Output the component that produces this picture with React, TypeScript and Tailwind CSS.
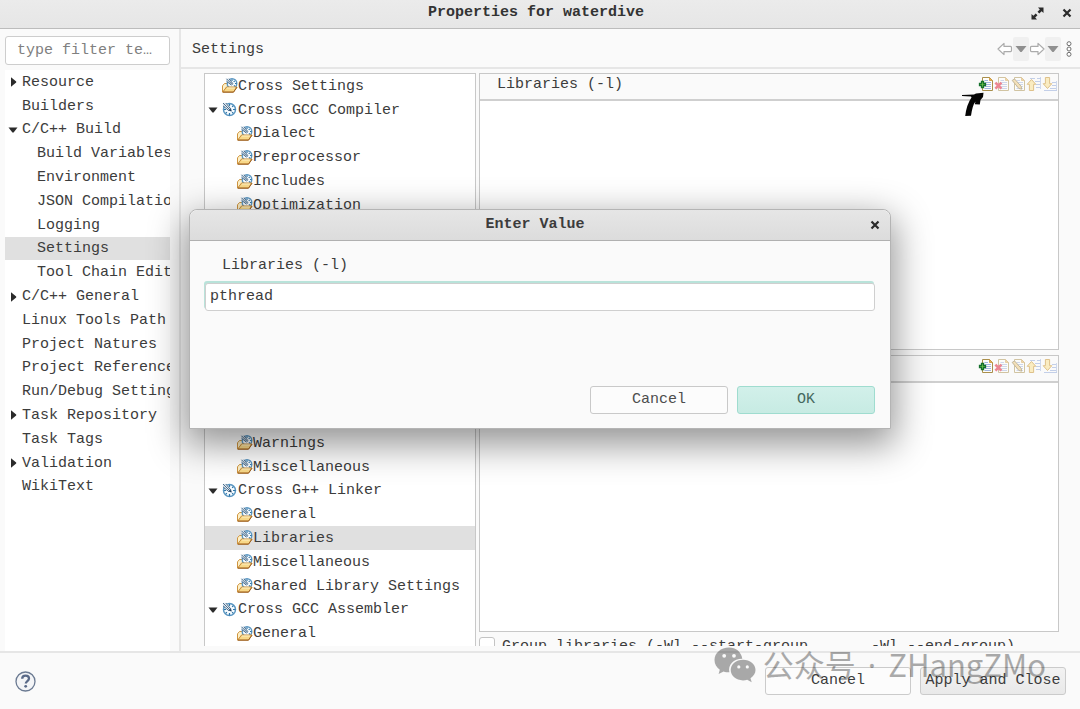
import React, { useState } from 'react';

interface TreeItem {
  label: string;
  level: number;
  open?: boolean;
  hasChildren?: boolean;
}

const pages: TreeItem[] = [
  { label: 'Resource', level: 0, hasChildren: true },
  { label: 'Builders', level: 0 },
  { label: 'C/C++ Build', level: 0, hasChildren: true, open: true },
  { label: 'Build Variables', level: 1 },
  { label: 'Environment', level: 1 },
  { label: 'JSON Compilation', level: 1 },
  { label: 'Logging', level: 1 },
  { label: 'Settings', level: 1 },
  { label: 'Tool Chain Editor', level: 1 },
  { label: 'C/C++ General', level: 0, hasChildren: true },
  { label: 'Linux Tools Path', level: 0 },
  { label: 'Project Natures', level: 0 },
  { label: 'Project References', level: 0 },
  { label: 'Run/Debug Settings', level: 0 },
  { label: 'Task Repository', level: 0, hasChildren: true },
  { label: 'Task Tags', level: 0 },
  { label: 'Validation', level: 0, hasChildren: true },
  { label: 'WikiText', level: 0 },
];

const tools: TreeItem[] = [
  { label: 'Cross Settings', level: 0 },
  { label: 'Cross GCC Compiler', level: 0, hasChildren: true },
  { label: 'Dialect', level: 1 },
  { label: 'Preprocessor', level: 1 },
  { label: 'Includes', level: 1 },
  { label: 'Optimization', level: 1 },
  { label: 'Debugging', level: 1 },
  { label: 'Warnings', level: 1 },
  { label: 'Miscellaneous', level: 1 },
  { label: 'Cross G++ Compiler', level: 0, hasChildren: true },
  { label: 'Dialect', level: 1 },
  { label: 'Preprocessor', level: 1 },
  { label: 'Includes', level: 1 },
  { label: 'Optimization', level: 1 },
  { label: 'Debugging', level: 1 },
  { label: 'Warnings', level: 1 },
  { label: 'Miscellaneous', level: 1 },
  { label: 'Cross G++ Linker', level: 0, hasChildren: true },
  { label: 'General', level: 1 },
  { label: 'Libraries', level: 1 },
  { label: 'Miscellaneous', level: 1 },
  { label: 'Shared Library Settings', level: 1 },
  { label: 'Cross GCC Assembler', level: 0, hasChildren: true },
  { label: 'General', level: 1 },
];

function Expander({ open }: { open?: boolean }) {
  return (
    <svg width="10" height="12" viewBox="0 0 10 12" fill="#2b2b2b" aria-hidden="true">
      {open ? <path d="M0.5 3.5h9L5.6 8.6H4.4z" /> : <path d="M3 1.2 8.2 5.4v1.2L3 10.8z" />}
    </svg>
  );
}

// Dial with a stylus, used for tools
function ToolIcon() {
  return (
    <svg width="16" height="16" viewBox="0 0 16 16" fill="none" className="shrink-0" aria-hidden="true">
      <circle cx="7.5" cy="7.5" r="6" fill="#f6fbff" stroke="#5b97c2" strokeWidth="1.5" />
      <path d="M7.500 2v2M7.500 11v2.500M11 7.500h2.500M2 7.500h2M11.400 3.600l-1.300 1.300M11.400 11.400l-1.300-1.300M3.600 11.400l1.300-1.300" stroke="#2f76a8" strokeWidth="1.200" />
      <path d="M0.800 1.500 2 0.800h2.500l5.200 6-2 2.200L0.800 3.500z" fill="#dfe9f1" />
      <path d="m1 1 7.500 7.500M3.800 1 8.800 7M1 3.800 7 8.800" stroke="#3b5f80" strokeWidth="0.900" />
      <path d="m6.800 8.800 2.200-2.200.8 3z" fill="#1f3f60" />
    </svg>
  );
}

// Same dial sitting in an open folder, used for option categories
function CategoryIcon() {
  return (
    <svg width="16" height="16" viewBox="0 0 16 16" fill="none" className="shrink-0" aria-hidden="true">
      <path d="M0.500 14V7.800L2.500 5.500H6v5z" fill="#fdf0c8" stroke="#cf9540" />
      <circle cx="10" cy="5.500" r="4.800" fill="#f6fbff" stroke="#5b97c2" strokeWidth="1.400" />
      <path d="M10 1.500v1.500M13 5.500h1.500M12.700 2.800l-1 1M13 8.300l-1-1" stroke="#2f76a8" strokeWidth="1.200" />
      <path d="M4.200 0.500h3l4 5-1.500 2-5.500-4.500z" fill="#dfe9f1" />
      <path d="m4.500 0.800 6 6M7 0.800l4 5M4.500 3.200l5 4" stroke="#3b5f80" strokeWidth="0.900" />
      <path d="M4.500 9h10.500l-3.500 5H0.800z" fill="#f8d888" stroke="#c58a38" strokeLinejoin="round" />
      <path d="M0.800 14.200h10.700l3.500-5" stroke="#9c5f22" />
      <path d="M5 10h8" stroke="#fdf0c4" />
    </svg>
  );
}

interface TreeProps {
  name: string;
  items: TreeItem[];
  selected: number;
  onSelect: (index: number) => void;
  icons?: boolean;
}

function Tree({ name, items, selected, onSelect, icons }: TreeProps) {
  return (
    <ul aria-label={name} className="grid h-full grid-rows-[repeat(24,minmax(0,1fr))]">
      {items.map((item, i) => (
        <li key={i} className="min-h-0 min-w-0">
          <button
            type="button"
            onClick={() => onSelect(i)}
            className={`flex h-full w-full items-center overflow-hidden pt-px whitespace-nowrap text-left leading-5 ${
              item.level === 1 ? 'pl-[15px]' : ''
            } ${selected === i ? 'bg-[#e0e0e0]' : ''}`}
          >
            <span className="flex w-[17px] shrink-0 justify-center pr-px">
              {item.hasChildren && <Expander open={item.open || icons} />}
            </span>
            {icons && (item.hasChildren ? <ToolIcon /> : <CategoryIcon />)}
            <span className="pt-px">{item.label}</span>
          </button>
        </li>
      ))}
    </ul>
  );
}

function PageShape() {
  return (
    <>
      <path d="M4.500 1.500h7l3 3v10h-10z" fill="#fffefa" stroke="#a98f4c" />
      <path d="M11.500 1.500v3h3z" fill="#e5b55a" stroke="#c9963c" strokeWidth="0.800" />
      <path d="M6.500 4.500H10M6.500 6.500H13M6.500 8.500H13M6.500 10.500H13M6.500 12.500H13" stroke="#a3b6e0" />
    </>
  );
}

const toolbar = [
  {
    name: 'Add',
    enabled: true,
    icon: (
      <>
        <PageShape />
        <path d="M3.500 5.500h2v2h2v2h-2v2h-2v-2h-2v-2h2z" fill="#7bcf4c" stroke="#14702c" strokeWidth="1.300" />
      </>
    ),
  },
  {
    name: 'Delete',
    enabled: false,
    icon: (
      <>
        <PageShape />
        <path d="m1.400 6.600 6 6M7.400 6.600l-6 6" stroke="#e0142c" strokeWidth="2.600" />
      </>
    ),
  },
  {
    name: 'Edit',
    enabled: false,
    icon: (
      <>
        <PageShape />
        <path d="M2.200 4.400 4.600 3l6.600 7.400.4 2.800-2.800-.8z" fill="#f0c878" stroke="#8a7440" />
      </>
    ),
  },
  {
    name: 'Move Up',
    enabled: false,
    icon: (
      <>
        <path d="M4 2.500h5M11 2.500h4M9 5.500h5M10 8.500h4M10 11.500h4" stroke="#8ea6d8" />
        <path d="M14.500 1v12" stroke="#8ea6d8" strokeWidth="0.800" />
        <path d="M5.500 3.500 9.800 8.300H7.600v6.200H3.400V8.300H1.200z" fill="#fbe08a" stroke="#c48a1c" />
      </>
    ),
  },
  {
    name: 'Move Down',
    enabled: false,
    icon: (
      <>
        <path d="M10 6.500h4M10 9.500h4M8 12.500h6M2 14.500h13" stroke="#8ea6d8" />
        <path d="M14.500 5v10" stroke="#8ea6d8" strokeWidth="0.800" />
        <path d="M5.500 12.500 9.800 7.700H7.600V1.500H3.400v6.200H1.200z" fill="#fbe08a" stroke="#c48a1c" />
      </>
    ),
  },
];

function ListPanel({ title }: { title: string }) {
  return (
    <section className="flex min-h-0 flex-1 flex-col border border-[#c8c8c8] bg-white">
      <header className="flex h-[27px] shrink-0 items-start justify-between border-b-2 border-[#cfcfcf] bg-[#fafafa] pl-[17px]">
        <h2 className="pt-px leading-5">{title}</h2>
        <div className="flex pt-[2px]">
          {toolbar.map((tool) => (
            <button key={tool.name} type="button" aria-label={tool.name} disabled={!tool.enabled}>
              <svg
                width="16"
                height="16"
                viewBox="0 0 16 16"
                fill="none"
                className={tool.enabled ? '' : 'opacity-50'}
              >
                {tool.icon}
              </svg>
            </button>
          ))}
        </div>
      </header>
    </section>
  );
}

function CloseIcon() {
  return (
    <svg width="10" height="10" viewBox="0 0 10 10" stroke="#2b2b2b" strokeWidth="2.200" aria-hidden="true">
      <path d="m1.500 1.500 7 7M8.500 1.500l-7 7" />
    </svg>
  );
}

function HistoryButtons() {
  return (
    <div className="flex items-center">
      <button type="button" aria-label="Back">
        <svg width="16" height="14" viewBox="0 0 16 14" fill="#fff" stroke="#ababab" strokeWidth="1.200">
          <path d="M1 7 7 1.400v3h6.500q1 0 1 1v3.200q0 1-1 1H7v3z" strokeLinejoin="round" />
        </svg>
      </button>
      <button type="button" aria-label="Back history" className="rounded-xs bg-[#f0f0f0] px-[2px] py-2">
        <svg width="12" height="8" viewBox="0 0 12 8" fill="#8f8f8f">
          <path d="M0.500 1h11L6.600 7H5.400z" />
        </svg>
      </button>
      <button type="button" aria-label="Forward">
        <svg width="16" height="14" viewBox="0 0 16 14" fill="#fff" stroke="#ababab" strokeWidth="1.200">
          <path d="M15 7 9 1.400v3H2.500q-1 0-1 1v3.200q0 1 1 1H9v3z" strokeLinejoin="round" />
        </svg>
      </button>
      <button type="button" aria-label="Forward history" className="rounded-xs bg-[#f0f0f0] px-[2px] py-2">
        <svg width="12" height="8" viewBox="0 0 12 8" fill="#8f8f8f">
          <path d="M0.500 1h11L6.600 7H5.400z" />
        </svg>
      </button>
      <button type="button" aria-label="View menu" className="ml-[5px]">
        <svg width="6" height="16" viewBox="0 0 6 16" fill="#fff" stroke="#6e6e6e">
          <circle cx="3" cy="2.700" r="2" />
          <circle cx="3" cy="8" r="2" />
          <circle cx="3" cy="13.300" r="2" />
        </svg>
      </button>
    </div>
  );
}

function EnterValueDialog() {
  const [value, setValue] = useState('pthread');

  return (
    <div className="absolute inset-0 flex items-start justify-center pt-[209px]">
      <div
        role="dialog"
        aria-labelledby="dialog-title"
        className="w-[65%] rounded-t-lg border border-[#b4b4b4] bg-[#fafafa] shadow-[0_12px_36px_4px_rgba(0,0,0,0.42)]"
      >
        <header className="grid h-[31px] grid-cols-[30px_1fr_40px] items-center rounded-t-lg border-b border-[#b0b0b0] bg-linear-to-b from-[#e6e6e6] to-[#dcdcdc]">
          <h2 id="dialog-title" className="col-start-2 text-center font-bold leading-5">
            Enter Value
          </h2>
          <button type="button" aria-label="Close" className="justify-self-end pr-[10px]">
            <CloseIcon />
          </button>
        </header>
        <div className="flex flex-col px-[15px] pt-[15px] pb-[14px]">
          <label htmlFor="value" className="pl-[17px] leading-5">
            Libraries (-l)
          </label>
          <input
            id="value"
            type="text"
            value={value}
            onChange={(e) => setValue(e.target.value)}
            className="mt-[7px] h-[28px] rounded-[3px] border border-[#cfcfcf] bg-white px-1 pb-px shadow-[-1px_-2px_0_0_#b9e3da] outline-none"
          />
          <div className="mt-[75px] flex justify-end gap-[9px]">
            <button type="button" className="h-7 w-[138px] rounded-[3px] border border-[#c9c9c9] bg-[#fcfcfc] text-[#4d4d4d]">
              Cancel
            </button>
            <button
              type="button"
              className="h-7 w-[138px] rounded-[3px] border border-[#9fdccf] bg-linear-to-b from-[#d2f0ea] to-[#c7ebe3] text-[#45695f]"
            >
              OK
            </button>
          </div>
        </div>
      </div>
    </div>
  );
}

function Watermark() {
  return (
    <div className="pointer-events-none absolute right-[34px] bottom-[26px] flex items-center gap-[7px] text-black opacity-32">
      <svg width="42" height="36" viewBox="0 0 42 36" fill="currentColor" aria-hidden="true">
        <path
          fillRule="evenodd"
          d="M15 0.500C6.800 0.500 0.500 6 0.500 13c0 4 2 7.400 5.300 9.700L4.600 27l5-2.600c1.900.6 3.600.9 5.800.9-1.800-7.300 4.400-13.600 12.900-13.500C27.400 5 22 .5 15 .5zM10.200 6.900a1.900 1.900 0 1 1 0 3.800 1.900 1.900 0 0 1 0-3.800zm9.800 0a1.900 1.900 0 1 1 0 3.800 1.900 1.900 0 0 1 0-3.800z"
        />
        <path
          fillRule="evenodd"
          d="M29 12.700c-7 0-12.300 4.600-12.300 10.400S22 33.400 29 33.400c1.500 0 2.900-.2 4.200-.6l4.500 2.400-1.200-4c3-1.900 5-4.800 5-8.100 0-5.800-5.500-10.400-12.500-10.400zm-4.200 5.600a1.600 1.600 0 1 1 0 3.200 1.600 1.600 0 0 1 0-3.200zm8.500 0a1.600 1.600 0 1 1 0 3.200 1.600 1.600 0 0 1 0-3.200z"
        />
      </svg>
      <span className="font-['Noto_Sans_CJK_SC',sans-serif] text-[31px] leading-9 whitespace-nowrap">
        公众号<span className="px-1 font-['Noto_Sans',sans-serif]"> · </span>ZHangZMo
      </span>
    </div>
  );
}

export default function App() {
  const [page, setPage] = useState(7);
  const [tool, setTool] = useState(19);

  return (
    <div className="relative flex h-screen flex-col overflow-hidden bg-[#fafafa] font-['Liberation_Mono','Courier_New',monospace] text-[15px] text-[#3c3c3c]">
      <header className="grid h-[29px] shrink-0 grid-cols-[72px_1fr_80px] items-center border-b border-[#bcbcbc] bg-linear-to-b from-[#ebebeb] to-[#e6e6e6]">
        <h1 className="col-start-2 pb-[2px] text-center font-bold leading-5 text-[#333]">Properties for waterdive</h1>
        <div className="flex items-center justify-end gap-[18px] pr-2 pb-[2px]">
          <button type="button" aria-label="Maximize">
            <svg width="13" height="13" viewBox="0 0 13 13" fill="#2b2b2b">
              <path d="M7 0.500h5.500V6L10.600 4.200 8.300 6.500 6.500 4.700 8.800 2.400zM6 12.500H.5V7l1.900 1.800 2.300-2.300 1.800 1.800-2.300 2.300z" />
            </svg>
          </button>
          <button type="button" aria-label="Close">
            <CloseIcon />
          </button>
        </div>
      </header>

      <main className="flex min-h-0 flex-1">
        <nav className="flex w-[181px] shrink-0 flex-col border-r-2 border-[#e6e6e6] pt-[7px] pr-[9px] pl-[5px]">
          <input
            type="text"
            aria-label="Filter"
            placeholder="type filter te…"
            className="h-[29px] w-full rounded-[3px] border border-[#cdcdcd] bg-white px-[11px] outline-none placeholder:text-[#808080]"
          />
          <div className="mt-[5px] min-h-0 flex-1 bg-white pb-[10px]">
            <Tree name="Pages" items={pages} selected={page} onSelect={setPage} />
          </div>
        </nav>

        <div className="flex min-w-0 flex-1 flex-col">
          <header className="flex h-10 shrink-0 items-center justify-between border-b-2 border-[#e6e6e6] pt-px pr-2 pl-[11px]">
            <h2 className="pt-[2px] leading-5">Settings</h2>
            <HistoryButtons />
          </header>
          <div className="mt-1 mb-[5px] flex min-h-0 flex-1 gap-[3px] overflow-hidden pr-[21px] pl-[23px]">
            <div className="w-[272px] shrink-0 border border-b-0 border-[#c8c8c8] bg-white pb-px">
              <Tree name="Tool settings" items={tools} selected={tool} onSelect={setTool} icons />
            </div>
            <div className="flex min-w-0 flex-1 flex-col gap-[5px]">
              <ListPanel title="Libraries (-l)" />
              <ListPanel title="Library search path (-L)" />
              <label className="flex h-[9px] shrink-0 items-start gap-[7px] overflow-hidden leading-5 whitespace-pre">
                <input
                  type="checkbox"
                  className="size-4 shrink-0 appearance-none rounded-[3px] border border-[#c4c4c4] bg-white"
                />
                Group libraries (-Wl,--start-group  ...  -Wl,--end-group)
              </label>
            </div>
          </div>
        </div>
      </main>

      <footer className="flex h-[58px] shrink-0 items-center justify-between border-t-2 border-[#e6e6e6] pr-[14px] pl-[15px]">
        <button type="button" aria-label="Help">
          <svg width="21" height="21" viewBox="0 0 21 21" fill="none">
            <circle cx="10.500" cy="10.500" r="9.500" fill="#f4f5f7" stroke="#6b7a92" strokeWidth="1.300" />
            <path d="M7.200 7.800c0-2 1.400-3.200 3.400-3.200s3.400 1.200 3.400 3c0 2.500-3.200 2.600-3.200 5" stroke="#5a6a88" strokeWidth="2.300" />
            <circle cx="10.700" cy="15.300" r="1.400" fill="#5a6a88" />
          </svg>
        </button>
        <div className="flex gap-[9px]">
          <button type="button" className="h-7 w-[146px] rounded-[3px] border border-[#cbcbcb] bg-[#fcfcfc]">
            Cancel
          </button>
          <button
            type="button"
            className="h-7 w-[146px] rounded-[3px] border border-[#cbcbcb] bg-linear-to-b from-[#f2f2f2] to-[#e9e9e9] whitespace-nowrap"
          >
            Apply and Close
          </button>
        </div>
      </footer>

      <EnterValueDialog />

      {/* Hand-drawn pointer at the Add button */}
      <svg
        width="24"
        height="26"
        viewBox="0 0 24 26"
        className="pointer-events-none absolute top-[91px] right-[95px]"
        aria-hidden="true"
      >
        <path
          d="M1 4 13 3.600 15 2.500 22.500 1.800 22 6 19.500 9 18.800 13.500 13.800 13.200 14.500 10.500Q11.500 14 10 24.800L4.200 25Q5.600 13.500 10.500 6.500L10 5.400 1 5z"
          fill="#050505"
        />
      </svg>

      <Watermark />
    </div>
  );
}
